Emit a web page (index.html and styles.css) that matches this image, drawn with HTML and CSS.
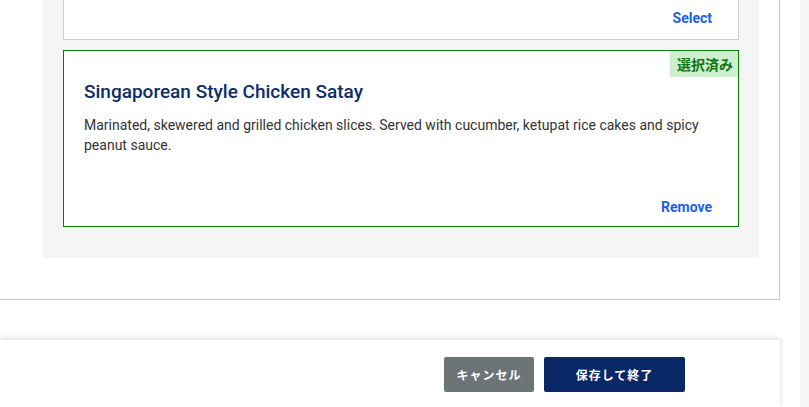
FILE: index.html
```html
<!DOCTYPE html>
<html lang="ja">
<head>
<meta charset="utf-8">
<title>Menu selection</title>
<link rel="stylesheet" href="styles.css">
</head>
<body>
<div class="page">
  <div class="main">
    <section class="panel">
      <div class="options">
        <article class="card card--cut">
          <div class="card__actions"><a class="link" href="#">Select</a></div>
        </article>
        <article class="card card--selected">
          <span class="badge">選択済み</span>
          <h2 class="card__title">Singaporean Style Chicken Satay</h2>
          <p class="card__desc">Marinated, skewered and grilled chicken slices. Served with cucumber, ketupat rice cakes and spicy peanut sauce.</p>
          <div class="card__actions"><a class="link" href="#">Remove</a></div>
        </article>
      </div>
    </section>
    <footer class="footer">
      <button class="btn btn--cancel" type="button">キャンセル</button>
      <button class="btn btn--save" type="button">保存して終了</button>
    </footer>
  </div>
  <div class="track"></div>
</div>
</body>
</html>
```

FILE: styles.css
```css
* { box-sizing: border-box; }

html, body {
  margin: 0;
  height: 100%;
  overflow: hidden;
  background: #ffffff;
  font-family: "Roboto", "Noto Sans CJK JP", sans-serif;
  color: #333333;
}

.page {
  display: flex;
  height: 407px;
}

.main {
  width: 800px;
  display: flex;
  flex-direction: column;
  background: #ffffff;
}

.track {
  flex: 1;
  background: #f5f5f5;
}

.panel {
  width: 780px;
  border-right: 1px solid #c8c8c8;
  border-bottom: 1px solid #c8c8c8;
  padding: 0 20px 41px 43px;
}

.options {
  width: 716px;
  background: #f5f5f5;
  padding: 0 20px 31px 20px;
  display: flex;
  flex-direction: column;
  gap: 10px;
}

.card {
  position: relative;
  background: #ffffff;
  border: 1px solid #cccccc;
  padding: 30px 26px 9px 20px;
  display: flex;
  flex-direction: column;
}

.card--cut {
  border-top: 0;
  padding-top: 8px;
  padding-bottom: 11px;
}

.card--selected {
  border-color: #0b7d0b;
  height: 177px;
}

.badge {
  position: absolute;
  top: 0;
  right: 0;
  height: 26px;
  padding: 0 5px 0 7px;
  background: #cdefcd;
  color: #127412;
  font-family: "Noto Sans CJK JP", sans-serif;
  font-weight: 700;
  font-size: 14px;
  line-height: 26px;
}

.card__title {
  margin: 0;
  font-size: 19px;
  line-height: 22px;
  font-weight: 500;
  color: #0c2d6b;
}

.card__desc {
  margin: 12px 0 0;
  font-size: 14px;
  line-height: 20px;
  color: #333333;
}

.card__actions {
  margin-top: auto;
  display: flex;
  justify-content: flex-end;
}

.link {
  font-size: 14px;
  line-height: 20px;
  font-weight: 700;
  color: #1a5fe6;
  text-decoration: none;
}

.footer {
  margin-top: 40px;
  width: 780px;
  flex: 1;
  background: #ffffff;
  box-shadow: 0 -1px 6px rgba(0, 0, 0, 0.16);
  display: flex;
  justify-content: flex-end;
  align-items: flex-start;
  gap: 10px;
  padding: 17px 95px 0 0;
}

.btn {
  height: 35px;
  border: 0;
  border-radius: 2px;
  color: #ffffff;
  font-family: "Noto Sans CJK JP", sans-serif;
  font-weight: 700;
  font-size: 12px;
  letter-spacing: 1px;
  cursor: pointer;
}

.btn--cancel {
  width: 90px;
  background: #6c7476;
}

.btn--save {
  width: 141px;
  background: #0b2866;
}
```
